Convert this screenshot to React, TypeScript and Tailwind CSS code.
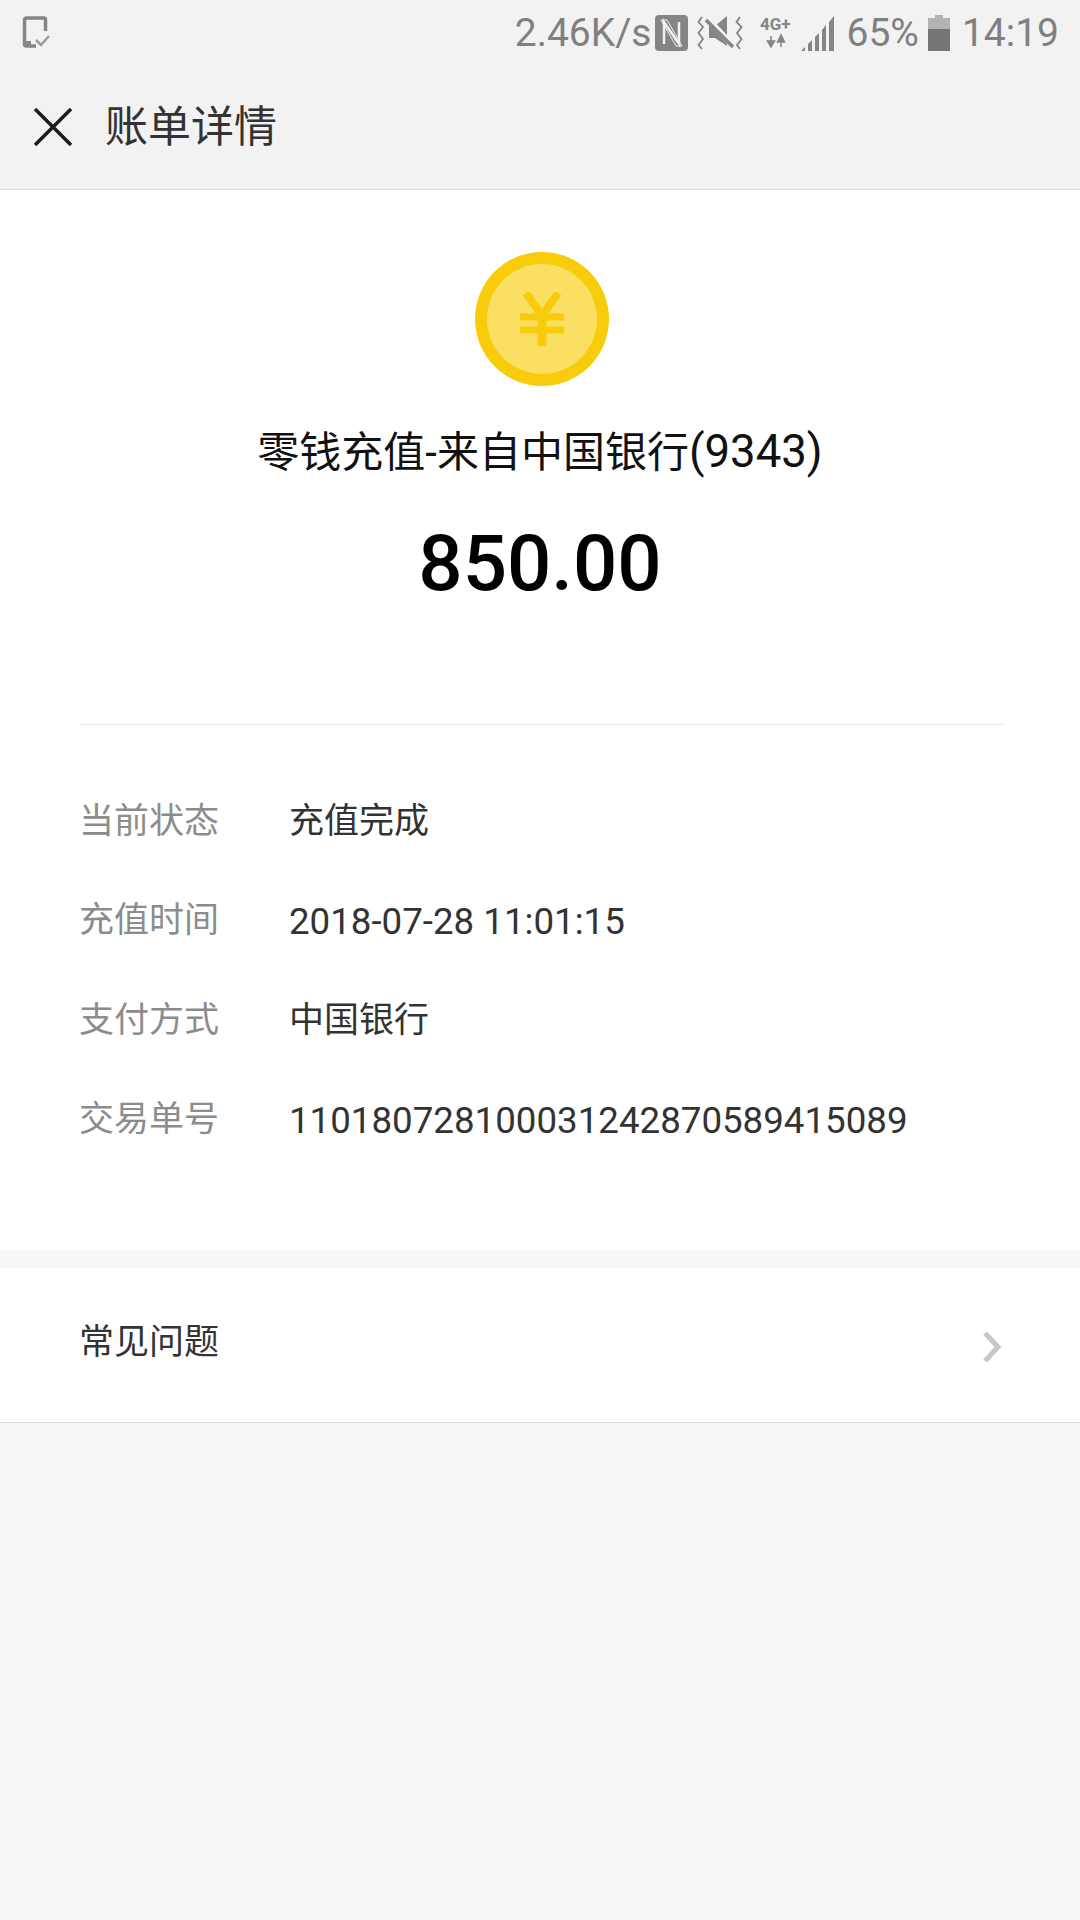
const rows = [
  { label: "当前状态", value: "充值完成", numeric: false },
  { label: "充值时间", value: "2018-07-28 11:01:15", numeric: true },
  { label: "支付方式", value: "中国银行", numeric: false },
  { label: "交易单号", value: "110180728100031242870589415089", numeric: true },
];

const fontStack = "font-['Roboto','Noto_Sans_CJK_SC',sans-serif]";

function ScreenshotIcon() {
  return (
    <svg width="30" height="34" viewBox="0 0 30 34" fill="none">
      <path d="M14 30H4.500A2 2 0 0 1 2.500 28V4A2 2 0 0 1 4.500 2H21.500A2 2 0 0 1 23.500 4V15" stroke="#858585" strokeWidth="3.500" />
      <path d="M2 25H9V31H2Z" fill="#858585" />
      <path d="M14 24L19 29L27 20" stroke="#9a9a9a" strokeWidth="2.500" />
    </svg>
  );
}

function NfcIcon() {
  return (
    <svg width="33" height="36" viewBox="0 0 33 36">
      <rect width="33" height="36" rx="4" fill="#858585" />
      <path d="M9 29V7L24 29V7" fill="none" stroke="#f2f2f2" strokeWidth="2.500" />
      <path d="M6 5H12L27 31H21Z" fill="none" stroke="#f2f2f2" strokeWidth="1" />
    </svg>
  );
}

function MuteVibrateIcon() {
  return (
    <svg width="47" height="36" viewBox="0 0 47 36" fill="none">
      <path d="M5 2L1.500 7L6 12L1.500 18L6 24L1.500 30L5 34" stroke="#858585" strokeWidth="1.800" />
      <path d="M43 2L39.500 7L44.500 12L40 18L44.500 24L40 30L43 34" stroke="#858585" strokeWidth="1.800" />
      <path d="M12 11H18L30 1V31L18 23H12Z" fill="#858585" />
      <path d="M9 2L37 32" stroke="#f2f2f2" strokeWidth="6" />
      <path d="M9 5L36 32" stroke="#858585" strokeWidth="3.500" />
    </svg>
  );
}

function NetworkIcon() {
  return (
    <svg width="33" height="36" viewBox="0 0 33 36">
      <text x="0" y="15" fontSize="17" fontWeight="700" fill="#858585" fontFamily="Roboto, sans-serif">
        4G+
      </text>
      <path d="M11 21V29M7.500 26L11 32L14.500 26Z M21 32V24M17.500 27L21 20L24.500 27Z" fill="#858585" stroke="#858585" strokeWidth="1.500" />
    </svg>
  );
}

function SignalIcon() {
  return (
    <svg width="33" height="36" viewBox="0 0 33 36" fill="#858585">
      <path d="M0 36L4 32V36Z" />
      <path d="M7 29L11 25V36H7Z" />
      <path d="M14 22L18 18V36H14Z" />
      <path d="M21 15L25 10V36H21Z" />
      <path d="M28 7L33 1V36H28Z" />
    </svg>
  );
}

function BatteryIcon() {
  return (
    <svg width="22" height="36" viewBox="0 0 22 36">
      <path d="M7 0H15V3H22V14H0V3H7Z" fill="#b3b3b3" />
      <rect y="14" width="22" height="22" fill="#757575" />
    </svg>
  );
}

function Coin() {
  return (
    <div className="ml-[4px] w-[134px] h-[134px] rounded-full bg-[#f8cc0a] flex items-center justify-center">
      <div className="w-[110px] h-[110px] rounded-full bg-[#fadf63] flex items-center justify-center">
        <svg width="44" height="54" viewBox="0 0 44 54" fill="none" stroke="#f8cc0a" strokeWidth="8">
          <path d="M6 1L22 24L38 1" />
          <path d="M22 22V54" strokeWidth="9" />
          <path d="M0 25H44M0 38H44" strokeWidth="7" />
        </svg>
      </div>
    </div>
  );
}

export default function App() {
  return (
    <div className={`w-[1080px] h-[1920px] bg-[#f8f8f8] flex flex-col ${fontStack}`}>
      {/* Status bar */}
      <div className="h-[66px] bg-[#f2f2f2] flex items-center pl-[22px] pr-[21px] text-[39px] text-[#808080]">
        <ScreenshotIcon />
        <div className="flex-1" />
        <span>2.46K/s</span>
        <div className="ml-[4px]"><NfcIcon /></div>
        <div className="ml-[9px]"><MuteVibrateIcon /></div>
        <div className="ml-[16px]"><NetworkIcon /></div>
        <div className="ml-[8px]"><SignalIcon /></div>
        <span className="ml-[12px]">65%</span>
        <div className="ml-[9px]"><BatteryIcon /></div>
        <span className="ml-[12px]">14:19</span>
      </div>

      {/* Header */}
      <div className="h-[124px] bg-[#f2f2f2] border-b border-[#dedede] flex items-center">
        <svg className="ml-[34px] mb-[2px]" width="38" height="38" viewBox="0 0 38 38" stroke="#1c1c1c" strokeWidth="3.500">
          <path d="M1 1L37 37M37 1L1 37" />
        </svg>
        <span className="ml-[33px] text-[43px] leading-none text-[#333333]">账单详情</span>
      </div>

      {/* Summary */}
      <div className="bg-white flex flex-col items-center pt-[62px]">
        <Coin />
        <div className="mt-[38px] h-[56px] flex items-center text-[42px] text-[#111111]">
          零钱充值-来自中国银行<span className="text-[45.5px]">(9343)</span>
        </div>
        <div className="mt-[42px] text-[78px] leading-[84px] font-medium text-black">850.00</div>
      </div>

      {/* Details */}
      <div className="bg-white px-[79px] pt-[118px] pb-[80px]">
        <div className="border-t border-[#e5e5e5] w-[924px] pt-[47px] flex flex-col">
          {rows.map((row) => (
            <div key={row.label} className="h-[99.5px] flex items-center">
              <span className="w-[210px] text-[35px] text-[#8c8c8c]">{row.label}</span>
              <span className={row.numeric ? "text-[#333333] text-[36.7px]" : "text-[#333333] text-[35px]"}>{row.value}</span>
            </div>
          ))}
        </div>
      </div>

      {/* FAQ */}
      <div className="h-[18px] shrink-0" />
      <div className="bg-white h-[155px] shrink-0 border-b border-[#dedede] flex items-center justify-between pl-[79px] pr-[78px]">
        <span className="mb-[4px] text-[35px] text-[#333333]">常见问题</span>
        <svg className="mt-[4px]" width="20" height="30" viewBox="0 0 20 30" fill="none" stroke="#c8c8c8" strokeWidth="5">
          <path d="M3 1L16 15L3 29" />
        </svg>
      </div>
    </div>
  );
}
